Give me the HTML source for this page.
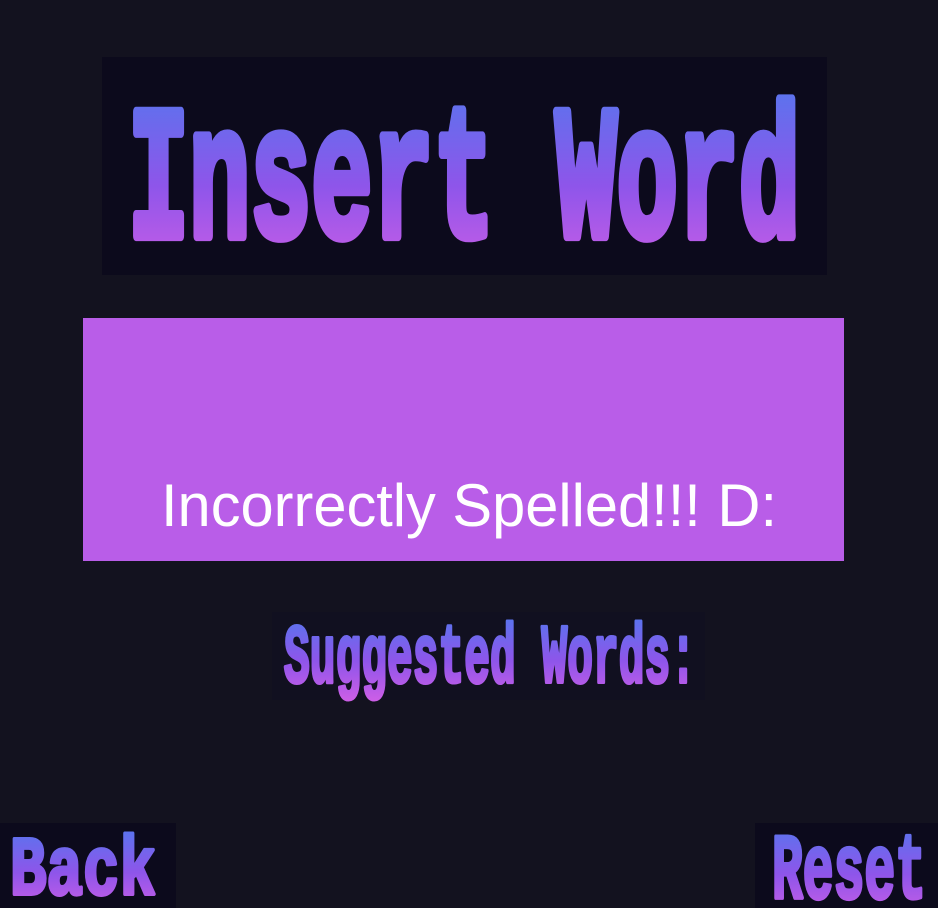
<!DOCTYPE html>
<html><head><meta charset="utf-8"><style>
html,body{margin:0;padding:0;background:#13121f;}
svg{display:block}
.t{font-family:"Liberation Mono","DejaVu Sans Mono",monospace;font-weight:bold;}
</style></head><body>
<svg width="938" height="908" viewBox="0 0 938 908" xmlns="http://www.w3.org/2000/svg">
<defs>
<linearGradient id="g1" x1="0" y1="0" x2="0" y2="1">
<stop offset="0" stop-color="#5577ee"/><stop offset="0.5" stop-color="#8e55ea"/><stop offset="1" stop-color="#d860e6"/></linearGradient>
</defs>
<rect width="938" height="908" fill="#13121f"/>
<rect x="102" y="57" width="725" height="218" fill="#0c0a1c"/>
<g transform="translate(128,236) scale(1,1.45)">
<text class="t" x="0" y="0" style="font-size:130px" fill="url(#g1)" stroke="url(#g1)" stroke-width="7" stroke-linejoin="round" textLength="672" lengthAdjust="spacingAndGlyphs">Insert Word</text>
</g>
<rect x="83" y="318" width="761" height="243" fill="#b95de8"/>
<text x="161" y="526" style="font-family:'Liberation Sans',Arial,sans-serif;font-size:60px" fill="#ffffff" textLength="616" lengthAdjust="spacingAndGlyphs">Incorrectly Spelled!!! D:</text>
<rect x="272" y="612" width="433" height="88" fill="#111020"/>
<g transform="translate(284,682) scale(1,1.35)">
<text class="t" x="0" y="0" style="font-size:62px" fill="url(#g1)" stroke="url(#g1)" stroke-width="3" stroke-linejoin="round" textLength="412" lengthAdjust="spacingAndGlyphs">Suggested Words:</text>
</g>
<rect x="0" y="823" width="176" height="85" fill="#0c0a1c"/>
<g transform="translate(10,894) scale(1,1.3)">
<text class="t" x="0" y="0" style="font-size:64px" fill="url(#g1)" stroke="url(#g1)" stroke-width="3" stroke-linejoin="round" textLength="146" lengthAdjust="spacingAndGlyphs">Back</text>
</g>
<rect x="755" y="823" width="183" height="85" fill="#0c0a1c"/>
<g transform="translate(772,898) scale(1,1.4)">
<text class="t" x="0" y="0" style="font-size:66px" fill="url(#g1)" stroke="url(#g1)" stroke-width="3" stroke-linejoin="round" textLength="154" lengthAdjust="spacingAndGlyphs">Reset</text>
</g>
</svg>
</body></html>
